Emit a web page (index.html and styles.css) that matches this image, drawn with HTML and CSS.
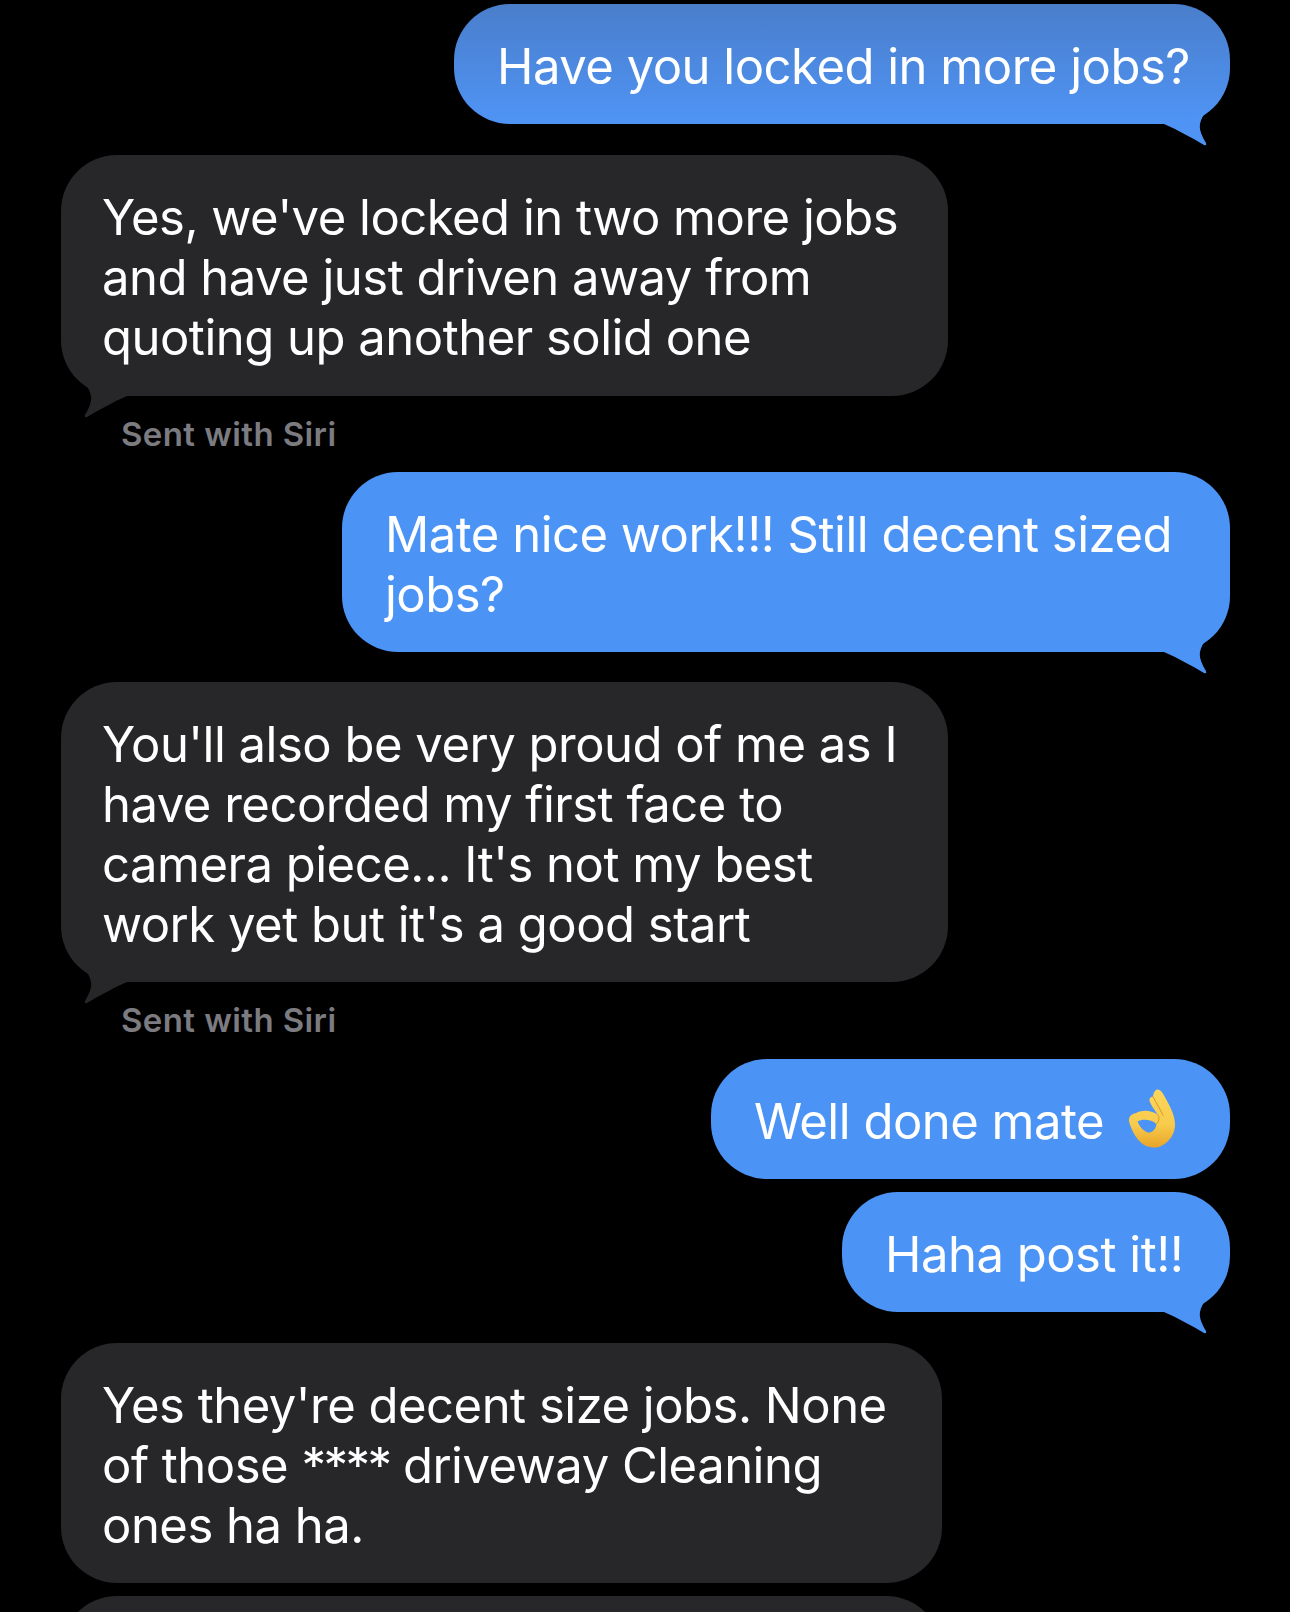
FILE: index.html
```html
<!DOCTYPE html>
<html lang="en">
<head>
    <meta charset="UTF-8">
    <title>Messages</title>
    <link rel="stylesheet" href="styles.css">
</head>
<body>

<div class="chat">
    <div class="sliver"></div>

    <div class="bubble me first w-jobs">
        Have you locked in more jobs?
        <svg class="tail tail-me" viewBox="0 0 70 60"><path d="M0 37 L4 38 C18 44 32 52 44 59 Q47 60 46 57 C42 50 39 44 40 38 C41 33 43 29 47 25 Z"/></svg>
    </div>

    <div class="bubble them tall">
        Yes, we've locked in two more jobs<br>
        and have just driven away from<br>
        quoting up another solid one
        <svg class="tail tail-them" viewBox="0 0 70 60"><path d="M0 37 L4 38 C18 44 32 52 44 59 Q47 60 46 57 C42 50 39 44 40 38 C41 33 43 29 47 25 Z"/></svg>
    </div>
    <div class="note short">Sent with Siri</div>

    <div class="bubble me w-mate">
        Mate nice work!!! Still decent sized<br>
        jobs?
        <svg class="tail tail-me" viewBox="0 0 70 60"><path d="M0 37 L4 38 C18 44 32 52 44 59 Q47 60 46 57 C42 50 39 44 40 38 C41 33 43 29 47 25 Z"/></svg>
    </div>

    <div class="bubble them">
        You'll also be very proud of me as I<br>
        have recorded my first face to<br>
        camera piece... It's not my best<br>
        work yet but it's a good start
        <svg class="tail tail-them" viewBox="0 0 70 60"><path d="M0 37 L4 38 C18 44 32 52 44 59 Q47 60 46 57 C42 50 39 44 40 38 C41 33 43 29 47 25 Z"/></svg>
    </div>
    <div class="note">Sent with Siri</div>

    <div class="bubble me w-done">
        <span class="with-emoji">Well done mate
            <svg class="emoji" viewBox="0 0 195 216">
                <defs>
                    <linearGradient id="handFill" x1="0" y1="0" x2="0" y2="1">
                        <stop offset="0" stop-color="#fbd65c"/>
                        <stop offset="0.6" stop-color="#f8cb4c"/>
                        <stop offset="1" stop-color="#e8a528"/>
                    </linearGradient>
                </defs>
                <path class="hand" d="M112 17 C122 14 130 24 136 36 C150 62 166 88 168 118 C170 148 150 178 122 188 C100 194 78 190 62 172 C48 158 36 136 30 112 C28 100 36 90 50 88 C62 80 82 78 100 84 C106 86 112 90 116 92 C108 80 96 64 92 52 C90 44 94 38 102 38 C102 30 106 20 112 17 Z"/>
                <path class="hole" d="M56 112 C70 104 98 106 112 120 C112 134 100 146 88 146 C74 142 60 128 56 112 Z"/>
                <path class="crease" d="M102 38 C112 58 124 76 132 94 M116 92 C122 100 122 112 112 120"/>
            </svg>
        </span>
    </div>

    <div class="bubble me w-haha">
        Haha post it!!
        <svg class="tail tail-me" viewBox="0 0 70 60"><path d="M0 37 L4 38 C18 44 32 52 44 59 Q47 60 46 57 C42 50 39 44 40 38 C41 33 43 29 47 25 Z"/></svg>
    </div>

    <div class="bubble them narrow">
        Yes they're decent size jobs. None<br>
        of those <span class="stars">****</span> driveway Cleaning<br>
        ones ha ha.
    </div>

    <div class="bubble them narrow stub"></div>
</div>

</body>
</html>
```

FILE: styles.css
```css
html, body {
    margin: 0;
    padding: 0;
    background-color: #000;
}

.chat {
    height: 1612px;
    overflow: hidden;
    padding: 0 60px 0 61px;
    display: flex;
    flex-direction: column;
    font-family: Inter, "Liberation Sans", sans-serif;
    font-size: 49px;
    line-height: 60px;
    letter-spacing: -0.5px;
    color: #fff;
}

/* bottom edge of the message scrolled off the top */
.sliver {
    height: 1px;
    width: 610px;
    margin-left: 279px;
    margin-bottom: 4px;
    background-color: #7fb2e6;
    border-radius: 0 0 6px 6px;
}

.bubble {
    position: relative;
    flex: none;
    box-sizing: border-box;
    padding: 33px 20px 27px 43px;
    border-radius: 56px;
    white-space: nowrap;
}

.me {
    align-self: flex-end;
    background-color: #4b93f5;
    fill: #4b93f5;
    margin-bottom: 30px;
}

.first {
    background-image: linear-gradient(#4a7ecb, #4f94f5);
    fill: #4f94f5;
    margin-bottom: 31px;
}

.them {
    align-self: flex-start;
    width: 887px;
    padding-left: 41px;
    background-color: #272729;
    fill: #272729;
}

.tall {
    padding-bottom: 28px;
}

.narrow {
    width: 881px;
}

.w-jobs { width: 776px; }
.w-mate { width: 888px; }
.w-done { width: 519px; margin-bottom: 13px; }
.w-haha { width: 388px; margin-bottom: 31px; }

.stub {
    margin-top: 13px;
    height: 120px;
}

.stars {
    letter-spacing: -2.5px;
}

.note {
    padding: 18px 0 0 60px;
    height: 58px;
    box-sizing: border-box;
    margin-bottom: 19px;
    font-size: 33px;
    line-height: 40px;
    font-weight: 600;
    letter-spacing: 0.4px;
    color: #7b7b80;
}

.short {
    margin-bottom: 18px;
}

.tail {
    position: absolute;
    bottom: -22px;
    width: 70px;
    height: 60px;
}

.tail-me {
    right: 0;
}

.tail-them {
    left: 0;
    transform: scaleX(-1);
}

.with-emoji {
    display: flex;
    gap: 15px;
}

.emoji {
    width: 65px;
    height: 72px;
    flex: none;
    margin: -8px 0 -4px;
}

.hand { fill: url(#handFill); }
.hole { fill: #4b93f5; }
.crease { fill: none; stroke: #d9952e; stroke-width: 3; stroke-linecap: round; }
```
